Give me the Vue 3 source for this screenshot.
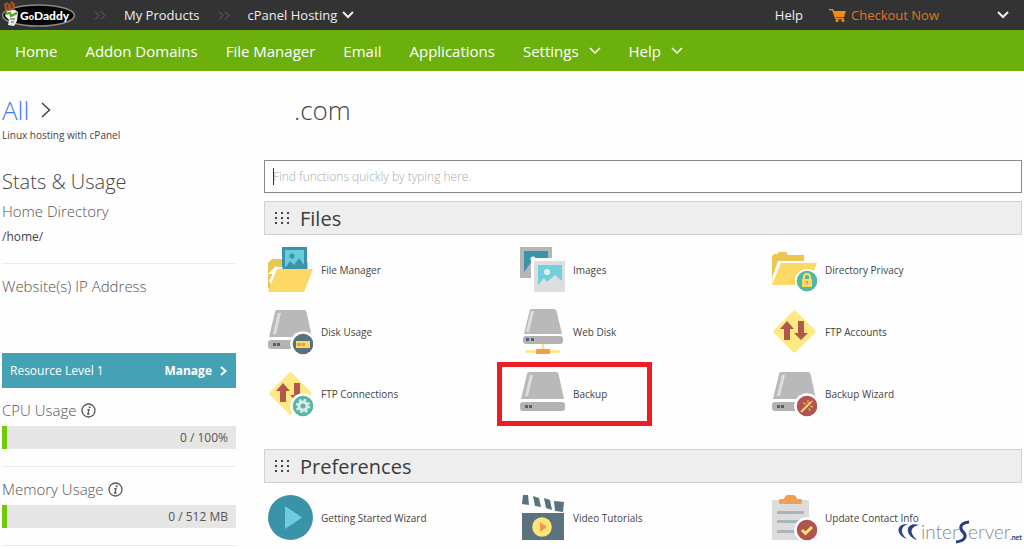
<script setup>
import { ref } from 'vue'

const query = ref('')

const menu = [
  { label: 'Home' },
  { label: 'Addon Domains' },
  { label: 'File Manager' },
  { label: 'Email' },
  { label: 'Applications' },
  { label: 'Settings', more: true },
  { label: 'Help', more: true },
]

const usage = [
  { label: 'CPU Usage', value: '0 / 100%', percent: 2 },
  { label: 'Memory Usage', value: '0 / 512 MB', percent: 2 },
]

const groups = [
  {
    title: 'Files',
    items: [
      { label: 'File Manager', icon: 'folder-image' },
      { label: 'Images', icon: 'images' },
      { label: 'Directory Privacy', icon: 'folder-lock' },
      { label: 'Disk Usage', icon: 'disk-usage' },
      { label: 'Web Disk', icon: 'web-disk' },
      { label: 'FTP Accounts', icon: 'ftp' },
      { label: 'FTP Connections', icon: 'ftp-gear' },
      { label: 'Backup', icon: 'disk', marked: true },
      { label: 'Backup Wizard', icon: 'disk-wizard' },
    ],
  },
  {
    title: 'Preferences',
    items: [
      { label: 'Getting Started Wizard', icon: 'play' },
      { label: 'Video Tutorials', icon: 'video' },
      { label: 'Update Contact Info', icon: 'contact' },
    ],
  },
]
</script>

<template>
  <div class="page">
    <header class="topbar">
      <a class="logo" href="#" aria-label="GoDaddy home">
        <svg width="76" height="28" viewBox="0 0 76 28">
          <ellipse cx="38.500" cy="14.500" rx="36" ry="10.500" fill="#050505" stroke="#8a8a8a" stroke-width="1.500" />
          <path d="M7 10 Q13 6 18 11 L17 20 L14 25 L8 24 L9 19 L5 15Z" fill="#eee" />
          <path d="M4 3 L7 1 L9 3 L12 0 L15 3 L15 8 L9 10 L5 9Z" fill="#9c5529" />
          <path d="M7 3 L8 8 M11 2 L12 7" stroke="#5d2a12" fill="none" />
          <path d="M5 13 L10 12 L11 15 L17 12" stroke="#5b9f20" stroke-width="2" fill="none" />
          <path d="M10 18 h5 M11 21 h3" stroke="#555" fill="none" />
          <text x="20" y="19" fill="#fff" class="logo-text">G<tspan font-size="9">o</tspan>Daddy</text>
        </svg>
      </a>
      <svg class="sep" width="12" height="9" viewBox="0 0 12 9"><path d="M1 0.500 L5 4.500 L1 8.500 M7 0.500 L11 4.500 L7 8.500" /></svg>
      <a href="#">My Products</a>
      <svg class="sep" width="12" height="9" viewBox="0 0 12 9"><path d="M1 0.500 L5 4.500 L1 8.500 M7 0.500 L11 4.500 L7 8.500" /></svg>
      <button type="button" class="plain">
        cPanel Hosting
        <svg class="chev bold" width="12" height="8" viewBox="0 0 12 8"><path d="M1 1 L6 6 L11 1" /></svg>
      </button>
      <a href="#" class="top-help">Help</a>
      <a href="#" class="checkout">
        <svg width="18" height="13" viewBox="0 0 18 13">
          <path d="M0 0.500 H3.500 L7 9.500 H15" fill="none" stroke="#f58a12" stroke-width="1.500" />
          <path d="M4.500 2 H17 L15 8 H6.800Z" fill="#f58a12" />
          <circle cx="8" cy="11.500" r="1.500" fill="#f58a12" /><circle cx="14" cy="11.500" r="1.500" fill="#f58a12" />
        </svg>
        Checkout Now
      </a>
      <button type="button" class="plain account" aria-label="Account menu">
        <svg class="chev bold" width="12" height="8" viewBox="0 0 12 8"><path d="M1 1 L6 6 L11 1" /></svg>
      </button>
    </header>

    <nav class="menu">
      <a v-for="m in menu" :key="m.label" href="#">
        {{ m.label }}
        <svg v-if="m.more" class="chev" width="12" height="8" viewBox="0 0 12 8"><path d="M1 1 L6 6 L11 1" /></svg>
      </a>
    </nav>

    <div class="layout">
      <aside class="side">
        <a class="all" href="#">
          All
          <svg width="10" height="16" viewBox="0 0 10 16"><path d="M1 1 L8.500 8 L1 15" fill="none" stroke="#444" stroke-width="1.500" /></svg>
        </a>
        <p class="plan">Linux hosting with cPanel</p>

        <h2>Stats &amp; Usage</h2>
        <section class="directory">
          <h3>Home Directory</h3>
          <p class="path">/home/</p>
        </section>
        <section class="address">
          <h3>Website(s) IP Address</h3>
        </section>

        <a class="resource" href="#">
          <span>Resource Level 1</span>
          <strong>Manage</strong>
          <svg width="7" height="10" viewBox="0 0 7 10"><path d="M1 1 L5.500 5 L1 9" fill="none" stroke="#fff" stroke-width="2" /></svg>
        </a>

        <section v-for="u in usage" :key="u.label" class="usage">
          <h3>
            {{ u.label }}
            <svg width="15" height="15" viewBox="0 0 15 15">
              <circle cx="7.500" cy="7.500" r="6.500" fill="none" stroke="#555" stroke-width="1.300" />
              <circle cx="8.600" cy="4.200" r="1" fill="#555" />
              <path d="M6.300 6.700 H8 L6.800 11 H8.500" fill="none" stroke="#555" stroke-width="1.300" />
            </svg>
          </h3>
          <div class="meter">
            <div class="fill" :style="{ width: u.percent + '%' }"></div>
            <span>{{ u.value }}</span>
          </div>
        </section>
      </aside>

      <main class="main">
        <h1>.com</h1>
        <div class="search">
          <input v-model="query" type="text" aria-label="Find functions" placeholder="Find functions quickly by typing here." />
          <i class="caret"></i>
        </div>

        <section v-for="g in groups" :key="g.title" class="group">
          <h2>
            <svg width="15" height="14" viewBox="0 0 15 14" fill="#444">
              <template v-for="r in 3" :key="r">
                <rect v-for="c in 3" :key="c" :x="(c - 1) * 6" :y="(r - 1) * 5 + 1" width="2" height="2" />
              </template>
            </svg>
            {{ g.title }}
          </h2>
          <ul>
            <li v-for="it in g.items" :key="it.label">
              <a href="#" :class="{ marked: it.marked }">
                <svg width="45" height="46" viewBox="0 0 45 46">
                  <template v-if="it.icon === 'folder-image'">
                    <path d="M0 16 L4 12 H13 L16 15 H40 V30 L2 44 L0 40Z" fill="#e9c752" />
                    <path d="M12 22 H41 V27 H0 L8 19Z" fill="#fff" />
                    <rect x="14" y="0" width="25" height="22" fill="#3b93a9" />
                    <rect x="17" y="3" width="19" height="17" fill="#6acbda" />
                    <circle cx="24" cy="9" r="2.500" fill="#3b93a9" />
                    <path d="M18 20 L22 14 L26 18 L31 11 L36 18 V20Z" fill="#3b93a9" />
                    <path d="M1 34 L8 20 H15 L5 40Z" fill="#fff" />
                    <path d="M9 22 H45 L36 45 H0Z" fill="#fcd965" />
                  </template>

                  <template v-else-if="it.icon === 'images'">
                    <rect x="0" y="0" width="32" height="31" fill="#b3b7b8" />
                    <rect x="4" y="4" width="24" height="21" fill="#3b93a9" />
                    <path d="M4 25 L12 14 L18 25Z" fill="#b3b7b8" />
                    <rect x="11" y="11" width="34" height="35" fill="#fff" />
                    <circle cx="13" cy="12" r="2.500" fill="#fff" />
                    <rect x="14" y="14" width="31" height="31" fill="#dedede" />
                    <rect x="18" y="18" width="24" height="20" fill="#70d0de" />
                    <circle cx="27" cy="25" r="3" fill="#e8eeee" />
                    <path d="M18 38 L24 31 L27 35 L35 28 L42 34 V39 H18Z" fill="#dedede" />
                  </template>

                  <template v-else-if="it.icon === 'folder-lock'">
                    <path d="M0 9 L2 7 H5 L7 5 H14 L16 8 H32 V17 H10 L0 35Z" fill="#e9c752" />
                    <path d="M6 14 H34 V18 H10 L1 35 L0 31Z" fill="#fff" />
                    <path d="M9 16 H45 L36 38 H0Z" fill="#fcd965" />
                    <circle cx="35" cy="34" r="12" fill="#fff" /><circle cx="35" cy="34" r="10.300" fill="#56b7a0" />
                    <path d="M32 33 V30 A3 3 0 0 1 38 30 V33" fill="none" stroke="#fcdb68" stroke-width="2" />
                    <rect x="30" y="32" width="10" height="8" fill="#fcdb68" />
                    <circle cx="35" cy="35" r="1.200" fill="#e89b46" /><rect x="34.500" y="35" width="1" height="3" fill="#e89b46" />
                  </template>

                  <template v-else-if="it.icon === 'web-disk'">
                    <path d="M11 0 H34 Q36 0 36.500 2 L42 25 H4 L9.500 2 Q10 0 11 0Z" fill="#b9b9b9" />
                    <path d="M11 2 H14 L9 23 H6Z" fill="#dedede" />
                    <rect x="3" y="27" width="40" height="8" rx="3" fill="#b3b3b3" />
                    <rect x="6" y="29" width="3" height="3" fill="#48646d" /><rect x="11" y="29" width="3" height="3" fill="#48646d" />
                    <path d="M23 35 V42 M6 42.500 H40" stroke="#ffe579" stroke-width="2.500" fill="none" />
                    <rect x="16" y="40" width="14" height="5" rx="1" fill="#eda04d" />
                  </template>

                  <template v-else-if="it.icon === 'disk' || it.icon === 'disk-usage' || it.icon === 'disk-wizard'">
                    <path d="M9 1 H36 Q38 1 38.500 3 L44 28 H1 L7 3 Q7.500 1 9 1Z" fill="#b9b9b9" />
                    <path d="M10 4 H13 L8 25 H5Z" fill="#dedede" />
                    <rect x="0" y="31" width="45" height="9" rx="3" fill="#b3b3b3" />
                    <rect x="5" y="34" width="3" height="3" fill="#48646d" /><rect x="9" y="34" width="3" height="3" fill="#48646d" />
                    <template v-if="it.icon === 'disk-usage'">
                      <circle cx="35" cy="35" r="12.800" fill="#fff" /><circle cx="35" cy="35" r="10.300" fill="#56717d" />
                      <rect x="28" y="32" width="14" height="7" fill="#fcd965" />
                      <rect x="29" y="34" width="4" height="3" fill="#e89b46" /><rect x="34" y="34" width="3" height="3" fill="#e89b46" />
                    </template>
                    <template v-if="it.icon === 'disk-wizard'">
                      <circle cx="35" cy="35" r="12.800" fill="#fff" /><circle cx="35" cy="35" r="10.300" fill="#af544e" />
                      <path d="M29 41 L39 31" stroke="#fcd965" stroke-width="2" />
                      <path d="M31 32 l3 1 M36 29 l0 3 M38 35 l3 1 M41 30 l-2 1 M37 37 l1 3" stroke="#e8a153" stroke-width="1.500" />
                    </template>
                  </template>

                  <template v-else-if="it.icon === 'ftp' || it.icon === 'ftp-gear'">
                    <rect x="7" y="7" width="31" height="31" rx="2" transform="rotate(45 22.500 22.500)" fill="#ffe985" />
                    <path d="M15 12 L22 20 H18 V31 H12 V20 H8Z" fill="#b2574c" />
                    <path d="M29 31 L36 24 H32 V12 H26 V24 H22Z" fill="#b2574c" />
                    <template v-if="it.icon === 'ftp-gear'">
                      <circle cx="35" cy="35" r="12.800" fill="#fff" /><circle cx="35" cy="35" r="10.300" fill="#56b7a0" />
                      <circle cx="35" cy="35" r="4" fill="none" stroke="#dcebe7" stroke-width="3" />
                      <circle cx="35" cy="35" r="6.300" fill="none" stroke="#dcebe7" stroke-width="2" stroke-dasharray="2.500 2.448" />
                    </template>
                  </template>

                  <template v-else-if="it.icon === 'play'">
                    <circle cx="22.500" cy="22.500" r="22.500" fill="#3b93a9" />
                    <path d="M17 11 L34 22.500 L17 34Z" fill="#6dcddd" />
                  </template>

                  <template v-else-if="it.icon === 'video'">
                    <path d="M3 0 H8 L9 10 L2 9Z M13 1 L19 3 L21 12 L15 11Z M24 3 L30 5 L32 15 L26 13Z M34 6 L44 7 L43 17 L35 16Z" fill="#5a737e" />
                    <rect x="2" y="18" width="42" height="27" fill="#5a737e" />
                    <circle cx="22" cy="32" r="9.800" fill="#ffe579" />
                    <path d="M20 27 L27 32 L20 37Z" fill="#e99b45" />
                  </template>

                  <template v-else>
                    <rect x="0" y="5" width="37" height="40" rx="1" fill="#dcdcdc" />
                    <path d="M7 8 V5 Q7 4 9 4 H12 Q13 0 16 0 H21 Q24 0 25 4 H28 Q30 4 30 5 V8 Q30 9 28 9 H9 Q7 9 7 8Z" fill="#eca251" />
                    <path d="M5 17.500 H32 M5 26.500 H28 M5 36.500 H23" stroke="#aab5bb" stroke-width="3" />
                    <circle cx="35" cy="35" r="12.800" fill="#fff" /><circle cx="35" cy="35" r="10.300" fill="#af544e" />
                    <path d="M30 35 L33.500 38.500 L40 32" stroke="#ffe579" stroke-width="3" fill="none" />
                  </template>
                </svg>
                <span>{{ it.label }}</span>
              </a>
            </li>
          </ul>
        </section>
      </main>
    </div>

    <svg class="brand" width="128" height="32" viewBox="0 -4 128 32" role="img" aria-label="interServer.net">
      <path d="M12 3 C0 2 -1 14 11 18 C4 12 4 6 12 3Z M23 4 C10 0 7 14 21 19 C13 12 14 6 23 4Z" fill="#2c4384" />
      <text x="25" y="18" class="brand-thin">inter</text>
      <path d="M73 1 C62 2 64 9 68 12 C71 16 68 20 60 21" fill="none" stroke="#263d82" stroke-width="3" />
      <text x="72" y="18" class="brand-thin">erver</text>
      <text x="114" y="19" class="brand-net">.net</text>
    </svg>
  </div>
</template>

<style>
body {
  margin: 0;
  background: #fefefe;
}
</style>

<style scoped>
.page {
  position: relative;
  min-height: 100vh;
  overflow: hidden;
  background: #fefefe;
  color: #444;
  font-family: "Open Sans", "Noto Sans", sans-serif;
  font-size: 10px;
}

a {
  color: inherit;
  text-decoration: none;
}

h1, h2, h3, p, ul {
  margin: 0;
  padding: 0;
  font-weight: 300;
}

svg {
  flex: none;
}

.topbar {
  display: flex;
  align-items: center;
  height: 30px;
  padding-right: 15px;
  background: #333;
  color: #eee;
  font-size: 13px;
  font-weight: 400;
}

.logo {
  display: flex;
}

.logo-text {
  font-family: Lato, sans-serif;
  font-size: 12px;
  font-weight: 900;
}

.sep {
  margin: 0 18px;
  fill: none;
  stroke: #666;
}

.plain {
  display: flex;
  align-items: center;
  gap: 5px;
  padding: 0;
  border: 0;
  background: none;
  color: inherit;
  font: inherit;
}

.chev {
  fill: none;
  stroke: currentColor;
  stroke-width: 1.5;
}

.bold {
  stroke-width: 2;
}

.top-help {
  margin-left: auto;
}

.checkout {
  display: flex;
  align-items: center;
  gap: 4px;
  margin: 0 58px 0 26px;
  color: #e4731c;
}

.menu {
  display: flex;
  align-items: center;
  gap: 28px;
  height: 41px;
  padding-left: 15px;
  background: #6cb00e;
  color: #fff;
  font-size: 15px;
  font-weight: 500;
}

.menu a {
  display: flex;
  align-items: center;
  gap: 10px;
}

.layout {
  display: grid;
  grid-template-columns: 234px 1fr;
  gap: 28px;
  padding: 0 2px;
}

.side {
  padding-top: 24px;
}

.all {
  display: flex;
  align-items: center;
  gap: 12px;
  color: #3f7ff0;
  font-size: 26px;
  font-weight: 300;
  line-height: 30px;
}

.plan {
  font-size: 10px;
  font-weight: 400;
  line-height: 20px;
}

.side h2 {
  margin-top: 24px;
  font-size: 20px;
  line-height: 26px;
}

.side h3 {
  display: flex;
  align-items: center;
  gap: 4px;
  color: #555;
  font-size: 15px;
  line-height: 32px;
}

.path {
  font-size: 12px;
  font-weight: 400;
  line-height: 20px;
}

.directory {
  height: 68px;
  border-bottom: 1px solid #ececec;
}

.address {
  height: 83px;
  padding-top: 6px;
}

.resource {
  display: flex;
  align-items: center;
  height: 35px;
  padding: 0 9px 0 8px;
  background: #45a2b4;
  color: #fff;
  font-size: 12px;
}

.resource strong {
  margin: 0 8px 0 auto;
  font-weight: 700;
}

.usage {
  height: 78px;
  border-bottom: 1px solid #ececec;
}

.usage h3 {
  padding-top: 6px;
}

.meter {
  display: flex;
  align-items: center;
  justify-content: space-between;
  height: 23px;
  padding-right: 8px;
  background: #e6e6e6;
  color: #555;
  font-size: 12px;
}

.fill {
  height: 100%;
  background: #74c80b;
}

.main {
  padding-top: 20px;
}

h1 {
  padding-left: 30px;
  font-size: 26px;
  line-height: 38px;
}

.search {
  position: relative;
  margin-top: 31px;
}

.search input {
  box-sizing: border-box;
  width: 100%;
  height: 33px;
  padding: 0 8px;
  border: 1px solid #888;
  background: #fff;
  color: #444;
  font: 300 12px "Open Sans", sans-serif;
}

.search input::placeholder {
  color: #aaa;
  opacity: 1;
}

.caret {
  position: absolute;
  top: 8px;
  left: 9px;
  width: 1px;
  height: 17px;
  background: #333;
}

.group {
  padding-top: 8px;
}

.group + .group {
  padding-top: 24px;
}

.group h2 {
  display: flex;
  align-items: center;
  gap: 10px;
  height: 32px;
  padding-left: 10px;
  border: 1px solid #d0d3d5;
  background: #eee;
  color: #3c3c3c;
  font-size: 20px;
  font-weight: 400;
}

ul {
  display: grid;
  grid-template-columns: repeat(3, 1fr);
  grid-auto-rows: 62px;
  column-gap: 2px;
  padding: 4px 0 0 4px;
  list-style: none;
}

li {
  display: flex;
  align-items: center;
}

li a {
  position: relative;
  display: flex;
  align-items: center;
  gap: 8px;
  font-weight: 400;
}

.marked::after {
  content: "";
  position: absolute;
  top: -9px;
  right: -45px;
  bottom: -9px;
  left: -23px;
  border: 5px solid #ee1c25;
}

.brand {
  position: absolute;
  right: 0;
  bottom: 0;
}

.brand-thin {
  fill: #858a93;
  font-family: Lato, sans-serif;
  font-size: 19px;
  font-weight: 300;
}

.brand-net {
  fill: #263d82;
  font-family: Lato, sans-serif;
  font-size: 7px;
  font-weight: 700;
}
</style>
